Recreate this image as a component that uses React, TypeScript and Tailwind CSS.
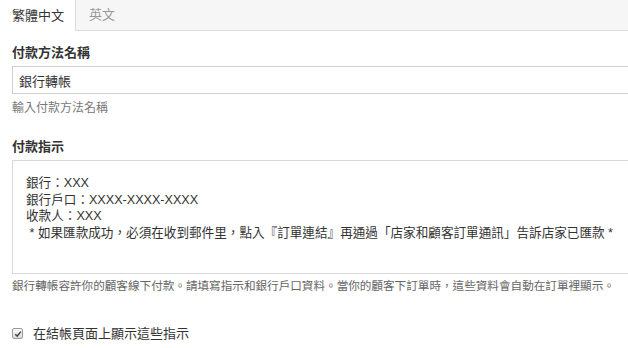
import { useState } from "react";

const font = {
  fontFamily: '"Liberation Sans", "Noto Sans CJK TC", sans-serif',
};

const instructions =
  "銀行：XXX\n銀行戶口：XXXX-XXXX-XXXX\n收款人：XXX\n * 如果匯款成功，必須在收到郵件里，點入『訂單連結』再通過「店家和顧客訂單通訊」告訴店家已匯款 *";

export default function App() {
  const [tab, setTab] = useState("zh");
  const [checked, setChecked] = useState(true);

  return (
    <div
      className="h-[348px] w-[628px] overflow-hidden bg-white text-[13px] text-[#333]"
      style={font}
    >
      <div className="flex h-[31px]">
        <button
          onClick={() => setTab("zh")}
          className="w-[75px] pl-[12px] text-left text-[13px] text-[#333]"
        >
          繁體中文
        </button>
        <button
          onClick={() => setTab("en")}
          className="flex-1 border-b border-l border-[#dcdcdc] bg-[#f6f6f6] pl-[13px] text-left text-[13px] text-[#999]"
        >
          英文
        </button>
      </div>

      <div className="w-[660px] pl-[12px]" data-tab={tab}>
        <label className="mt-[13px] block text-[13px] font-bold leading-[18px]">
          付款方法名稱
        </label>
        <input
          defaultValue="銀行轉帳"
          className="mt-[4px] block h-[28px] w-full border border-[#d0d0d0] px-[6px] text-[13px] text-[#333] outline-none"
          style={font}
        />
        <p className="mt-[6px] text-[12px] leading-[16px] text-[#777]">輸入付款方法名稱</p>

        <label className="mt-[22px] block text-[13px] font-bold leading-[18px]">
          付款指示
        </label>
        <textarea
          defaultValue={instructions}
          className="mt-[4px] block h-[114px] w-full resize-none border border-[#d8d8d8] pb-[4px] pl-[13px] pr-[6px] pt-[14px] text-[12.6px] leading-[16.6px] text-[#333] outline-none"
          style={font}
        />
        <p className="mt-[4px] text-[11.6px] leading-[16px] text-[#666]">
          銀行轉帳容許你的顧客線下付款。請填寫指示和銀行戶口資料。當你的顧客下訂單時，這些資料會自動在訂單裡顯示。
        </p>

        <label className="mt-[30px] flex items-center gap-[10px] text-[13px]">
          <span className="relative flex h-[11px] w-[11px] items-center justify-center rounded-[2px] border border-[#9a9a9a] bg-gradient-to-b from-[#fafafa] to-[#dcdcdc]">
            <input
              type="checkbox"
              checked={checked}
              onChange={(e) => setChecked(e.target.checked)}
              className="absolute inset-0 appearance-none"
            />
            {checked && (
              <svg viewBox="0 0 10 10" className="h-[8px] w-[8px]">
                <path d="M1.5 5.2 L4 7.6 L8.6 2" fill="none" stroke="#444" strokeWidth="1.8" />
              </svg>
            )}
          </span>
          在結帳頁面上顯示這些指示
        </label>
      </div>
    </div>
  );
}
